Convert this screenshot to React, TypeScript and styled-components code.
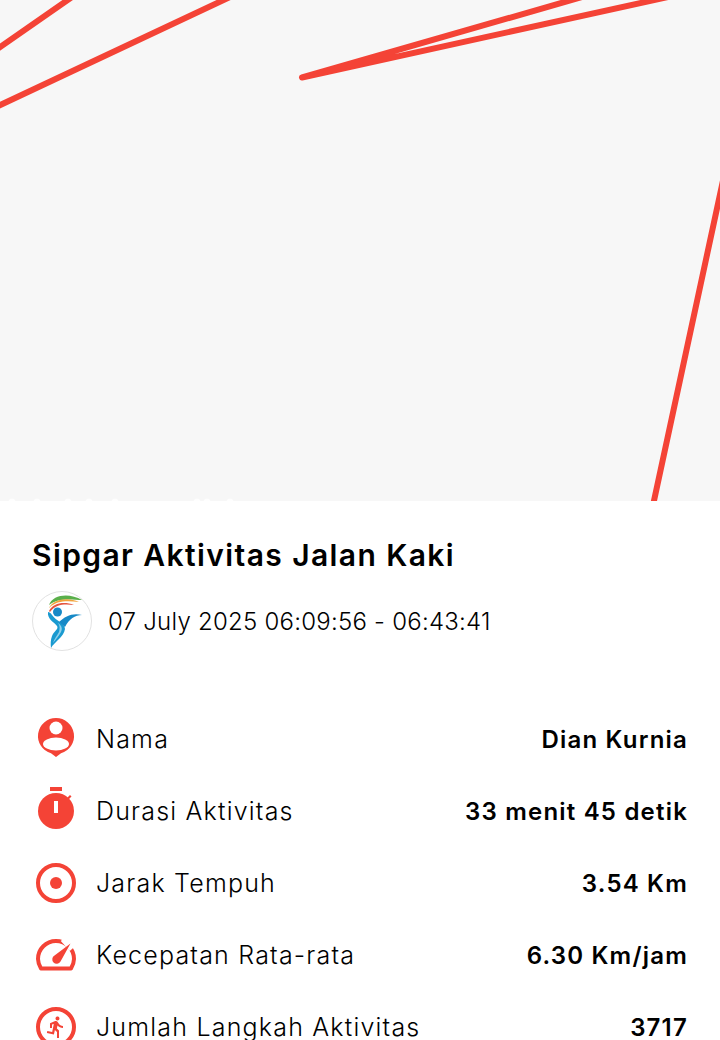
import styled, { createGlobalStyle } from "styled-components";
import { MdDirectionsRun } from "react-icons/md";

const RED = "#f44336";

const GlobalStyle = createGlobalStyle`
  html, body {
    margin: 0;
    padding: 0;
    background: #fff;
  }
`;

const Page = styled.div`
  width: 720px;
  height: 1040px;
  overflow: hidden;
  background: #fff;
  font-family: Inter, "Liberation Sans", sans-serif;
  color: #000;
`;

const MapArea = styled.div`
  height: 501px;
  background: #f7f7f7;
`;

const RouteSvg = styled.svg`
  display: block;
`;

const Sheet = styled.div`
  padding: 34px 32px 0;
`;

const Title = styled.h1`
  margin: 0;
  font-size: 30px;
  line-height: 40px;
  font-weight: 600;
  letter-spacing: 1.4px;
`;

const DateRow = styled.div`
  display: flex;
  align-items: center;
  gap: 16px;
  margin-top: 16px;
`;

const Logo = styled.svg`
  display: block;
  flex: none;
`;

const DateText = styled.div`
  font-size: 24px;
  font-weight: 300;
  letter-spacing: 0.24px;
`;

const Rows = styled.div`
  margin-top: 52px;
`;

const Row = styled.div`
  display: flex;
  align-items: center;
  height: 72px;
`;

const IconBox = styled.div`
  position: relative;
  flex: none;
  width: 48px;
  height: 48px;
  margin-right: 16px;
  color: ${RED};
`;

const Ring = styled.svg`
  display: block;
`;

const RunGlyph = styled(MdDirectionsRun)`
  position: absolute;
  left: 12px;
  top: 12px;
`;

const Label = styled.div`
  flex: 1;
  font-size: 25px;
  font-weight: 300;
  letter-spacing: 1.2px;
`;

const Value = styled.div`
  font-size: 24px;
  font-weight: 600;
  letter-spacing: 1.2px;
`;

const PersonIcon = () => (
  <Ring width="48" height="48" viewBox="0 0 48 48">
    <path
      d="M24 3a18 18 0 0 1 5 35.3L24 42l-5-3.7A18 18 0 0 1 24 3z"
      fill={RED}
    />
    <circle cx="24" cy="13" r="6.5" fill="#fff" />
    <ellipse cx="24" cy="29" rx="13" ry="6.5" fill="#fff" />
  </Ring>
);

const TimerIcon = () => (
  <Ring width="48" height="48" viewBox="0 0 48 48">
    <rect x="18" y="0" width="12" height="4" fill={RED} />
    <circle cx="24" cy="24" r="18" fill={RED} />
    <path d="M35 11l3-3 1.5 1.5-3 3z" fill={RED} />
    <rect x="22" y="14" width="4" height="12" fill="#fff" />
  </Ring>
);

const TargetIcon = () => (
  <Ring width="48" height="48" viewBox="0 0 48 48">
    <circle cx="24" cy="24" r="18" fill="none" stroke={RED} strokeWidth="4" />
    <circle cx="24" cy="24" r="6" fill={RED} />
  </Ring>
);

const GaugeIcon = () => (
  <Ring width="48" height="48" viewBox="0 0 48 48">
    <path
      d="M9 37.5C7 34 6 31.5 6 28A18 18 0 0 1 42 28C42 31.5 41 34 39 37.5H9z"
      fill="none"
      stroke={RED}
      strokeWidth="4"
      strokeLinejoin="round"
    />
    <path d="M31 8l9 10" stroke="#fff" strokeWidth="6" />
    <path d="M38.5 12.500L28.5 30.5a4.4 4.400 0 1 1-6-6z" fill={RED} />
  </Ring>
);

const RunIcon = () => (
  <>
    <Ring width="48" height="48" viewBox="0 0 48 48">
      <circle cx="24" cy="24" r="18" fill="none" stroke={RED} strokeWidth="4" />
    </Ring>
    <RunGlyph size={24} color={RED} />
  </>
);

const stats = [
  { icon: <PersonIcon />, label: "Nama", value: "Dian Kurnia" },
  { icon: <TimerIcon />, label: "Durasi Aktivitas", value: "33 menit 45 detik" },
  { icon: <TargetIcon />, label: "Jarak Tempuh", value: "3.54 Km" },
  { icon: <GaugeIcon />, label: "Kecepatan Rata-rata", value: "6.30 Km/jam" },
  { icon: <RunIcon />, label: "Jumlah Langkah Aktivitas", value: "3717" },
];

// faint bits of a map label showing at the bottom edge of the map
const labelBits = [12, 37, 68, 89, 115, 197, 207, 230];

export default function App() {
  return (
    <Page>
      <GlobalStyle />
      <MapArea>
        <RouteSvg width="720" height="501" viewBox="0 0 720 501">
          <g fill="none" stroke={RED} strokeWidth="6" strokeLinecap="round" strokeLinejoin="round">
            <path d="M-4 50L72-3" />
            <path d="M-4 107L230-3" />
            <path d="M582-3L302 77.500L668-3" />
            <path d="M724 176L653.500 503" />
          </g>
          {labelBits.map((x) => (
            <circle key={x} cx={x} cy="502" r="3.500" fill="#fff" opacity="0.8" />
          ))}
        </RouteSvg>
      </MapArea>
      <Sheet>
        <Title>Sipgar Aktivitas Jalan Kaki</Title>
        <DateRow>
          <Logo width="60" height="60" viewBox="0 0 60 60">
            <circle cx="30" cy="30" r="29.500" fill="#fff" stroke="#e2e2e2" />
            <path d="M17 14C21 3 38 2 50 9C41 9 27 6 17 14z" fill="#5aaf4a" />
            <path d="M17 17C21 8 36 6 47 11C36 10 25 9 17 17z" fill="#f2a33a" />
            <path d="M17 20C21 12 32 10 42 14C32 13 24 13 18 21z" fill="#e4553f" />
            <circle cx="25.500" cy="21" r="4.500" fill="#1689c7" />
            <path d="M16 21C15 28 22 31 25 35C27 38 22 40 20 45C18.500 49 18.500 53 19 57C22 51 32 46 33 38C33 32 24 30 20 24C19 22 17 21 16 21z" fill="#1a9ad0" />
            <path d="M27 41C28 37 28 35 26 32C29 34 31 37 29 41C27 45 24 48 21 52C22 48 25 45 27 41z" fill="#8fd0ea" />
            <path d="M27 31C33 25 41 21.500 50 24C43 24 37 28 33 36z" fill="#1689c7" />
          </Logo>
          <DateText>07 July 2025 06:09:56 - 06:43:41</DateText>
        </DateRow>
        <Rows>
          {stats.map((s) => (
            <Row key={s.label}>
              <IconBox>{s.icon}</IconBox>
              <Label>{s.label}</Label>
              <Value>{s.value}</Value>
            </Row>
          ))}
        </Rows>
      </Sheet>
    </Page>
  );
}
